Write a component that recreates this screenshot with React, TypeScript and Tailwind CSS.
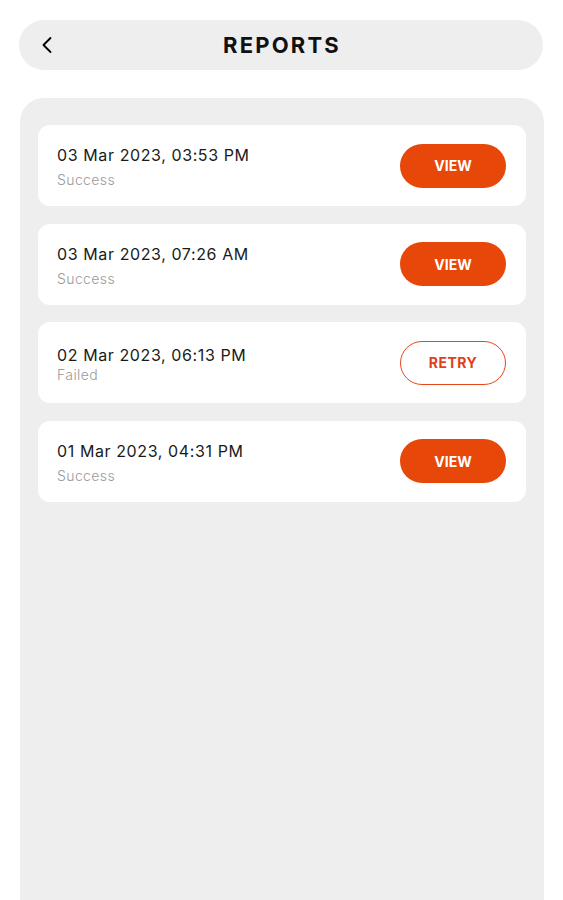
import { ChevronLeft } from 'lucide-react';

type Report = {
  date: string;
  status: 'Success' | 'Failed';
};

const reports: Report[] = [
  { date: '03 Mar 2023, 03:53 PM', status: 'Success' },
  { date: '03 Mar 2023, 07:26 AM', status: 'Success' },
  { date: '02 Mar 2023, 06:13 PM', status: 'Failed' },
  { date: '01 Mar 2023, 04:31 PM', status: 'Success' },
];

function ReportRow({ report }: { report: Report }) {
  const failed = report.status === 'Failed';
  return (
    <div className="flex items-center justify-between bg-white rounded-[12px] h-[81px] pl-[19px] pr-[20px]">
      <div className="flex flex-col pt-[2px]">
        <span className="text-[16px] leading-[22px] tracking-[0.6px] text-[#1a1a1a]">{report.date}</span>
        <span
          className={`text-[14px] leading-[18px] tracking-[0.4px] font-light text-[#9a9a9a] ${
            failed ? '' : 'mt-[5px]'
          }`}
        >
          {report.status}
        </span>
      </div>
      {failed ? (
        <button className="w-[106px] h-[44px] rounded-full border border-[#e8471a] text-[#e0401a] text-[14px] font-bold tracking-[0.5px]">
          RETRY
        </button>
      ) : (
        <button className="w-[106px] h-[44px] rounded-full bg-[#e8470a] text-white text-[14px] font-bold">
          VIEW
        </button>
      )}
    </div>
  );
}

export default function App() {
  return (
    <div className="min-h-[900px] bg-white px-[20px] pt-[20px] font-['Inter','Noto_Sans',sans-serif]">
      {/* Header */}
      <div className="relative flex items-center justify-center h-[50px] rounded-full bg-[#eeeeee] -ml-px">
        <ChevronLeft className="absolute left-[14px] w-[28px] h-[28px] text-black" strokeWidth={1.6} />
        <h1 className="text-[22px] font-bold tracking-[2.2px] text-[#111] pl-[2px]">REPORTS</h1>
      </div>

      {/* Reports panel */}
      <div className="mt-[28px] bg-[#eeeeee] rounded-t-[24px] min-h-[802px] px-[18px] pt-[27px] -mr-px">
        <div className="flex flex-col gap-[17.5px]">
          {reports.map((r, i) => (
            <ReportRow key={i} report={r} />
          ))}
        </div>
      </div>
    </div>
  );
}
